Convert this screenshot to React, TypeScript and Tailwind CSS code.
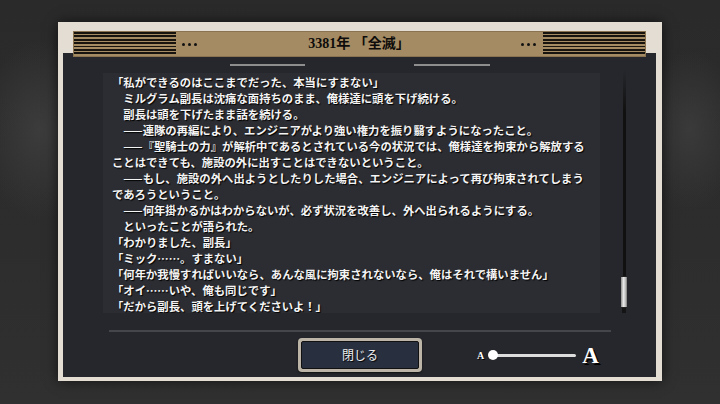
import React from "react";

const lines = [
  "「私ができるのはここまでだった、本当にすまない」",
  "　ミルグラム副長は沈痛な面持ちのまま、俺様達に頭を下げ続ける。",
  "　副長は頭を下げたまま話を続ける。",
  "　——連隊の再編により、エンジニアがより強い権力を振り翳すようになったこと。",
  "　——『聖騎士の力』が解析中であるとされている今の状況では、俺様達を拘束から解放する",
  "ことはできても、施設の外に出すことはできないということ。",
  "　——もし、施設の外へ出ようとしたりした場合、エンジニアによって再び拘束されてしまう",
  "であろうということ。",
  "　——何年掛かるかはわからないが、必ず状況を改善し、外へ出られるようにする。",
  "　といったことが語られた。",
  "「わかりました、副長」",
  "「ミック……。すまない」",
  "「何年か我慢すればいいなら、あんな風に拘束されないなら、俺はそれで構いません」",
  "「オイ……いや、俺も同じです」",
  "「だから副長、頭を上げてくださいよ！」",
];

function Dots() {
  return (
    <div className="flex gap-[3px]">
      <span className="w-[3px] h-[3px] rounded-full bg-[#111]" />
      <span className="w-[3px] h-[3px] rounded-full bg-[#111]" />
      <span className="w-[3px] h-[3px] rounded-full bg-[#111]" />
    </div>
  );
}

function Stripes() {
  return (
    <div className="w-[102px] h-[24px] bg-[repeating-linear-gradient(to_bottom,#17130f_0px,#17130f_1.7px,#a48b63_1.7px,#a48b63_3.4px)]" />
  );
}

export default function App() {
  return (
    <div className="w-[720px] h-[404px] overflow-hidden bg-[#2b2b2b] bg-[radial-gradient(ellipse_60px_90px_at_40px_130px,#3c3c3c,transparent),radial-gradient(ellipse_50px_80px_at_690px_130px,#3a3a3a,transparent),linear-gradient(to_bottom,#2a2a2a,#2d2d2d_60%,#303030)] flex justify-center pt-[22px]">
      <div className="w-[604px] h-[359px] bg-[#e4ddd4] shadow-[0_0_12px_rgba(0,0,0,0.6)] flex flex-col pt-[9px] pl-[5px] pr-[6px] pb-[4px]">
        <div className="relative z-10 mx-[10px] h-[26px] bg-[#a48b63] border border-[#8a7350] flex items-center justify-between">
          <div className="flex items-center gap-[6px]">
            <Stripes />
            <Dots />
          </div>
          <div
            className="text-[14px] font-semibold text-[#0e0c0a] leading-none"
            style={{ fontFamily: '"Liberation Serif", "Noto Sans CJK JP", serif' }}
          >
            3381年 「全滅」
          </div>
          <div className="flex items-center gap-[7px]">
            <Dots />
            <Stripes />
          </div>
        </div>
        <div className="-mt-[4px] flex-1 bg-[#26272c] flex flex-col">
          <div className="h-[13px] flex items-end pl-[167px]">
            <div className="w-[75px] h-[2px] bg-[#8e8e8e]" />
            <div className="w-[109px]" />
            <div className="w-[76px] h-[2px] bg-[#8e8e8e]" />
          </div>
          <div className="flex mt-[7px] pl-[40px] h-[240px]">
            <div
              className="w-[497px] h-[240px] bg-[#2c2d32] overflow-hidden pl-[9px] pt-[1px] text-[11.35px] leading-[16px] font-bold text-[#f4f4f4] whitespace-pre [text-shadow:1px_1px_1px_#000]"
              style={{ fontFamily: '"Noto Sans CJK JP", "Noto Sans", sans-serif' }}
            >
              {lines.map((l, i) => (
                <div key={i}>{l}</div>
              ))}
            </div>
            <div className="ml-[21px] w-[6px] flex flex-col items-center">
              <div className="w-[3px] h-[208px] -mt-[3px] bg-[linear-gradient(to_bottom,#26272c,#111_20%,#111)]" />
              <div className="w-[6px] h-[32px] rounded-[1px] bg-[linear-gradient(to_right,#8c8c8c,#e8e8e8_40%,#c8c8c8_70%,#7a7a7a)] border-y border-[#222]" />
              <div className="w-[4px] h-[5px] bg-[#141414]" />
            </div>
          </div>
          <div className="mt-[17px] ml-[46px] w-[502px] h-[2px] bg-[#44464c]" />
          <div className="mt-[6px] flex items-center">
            <div className="ml-[235px] w-[124px] h-[34px] rounded-[4px] bg-[#bcb5a7] p-[3px] shadow-[0_1px_2px_rgba(0,0,0,0.6)]">
              <div
                className="w-full h-full rounded-[2px] bg-[#283040] border border-[#111] flex items-center justify-center text-[12px] text-[#eeeeee] [text-shadow:1px_1px_1px_#000]"
                style={{ fontFamily: '"Noto Sans CJK JP", sans-serif' }}
              >
                閉じる
              </div>
            </div>
            <div className="ml-[55px] flex items-center" style={{ fontFamily: '"Liberation Serif", serif' }}>
              <span className="text-[10px] font-bold text-white leading-none mt-[2px] [text-shadow:1px_1px_0_#000]">A</span>
              <div className="relative ml-[4px] w-[88px] h-[10px] flex items-center">
                <div className="absolute left-[4px] right-0 h-[3px] bg-[#dddddd] rounded-full" />
                <div className="absolute left-0 w-[10px] h-[10px] rounded-full bg-white" />
              </div>
              <span className="ml-[6px] text-[23px] font-bold text-white leading-none [text-shadow:2px_2px_0_#000]">A</span>
            </div>
          </div>
        </div>
      </div>
    </div>
  );
}
